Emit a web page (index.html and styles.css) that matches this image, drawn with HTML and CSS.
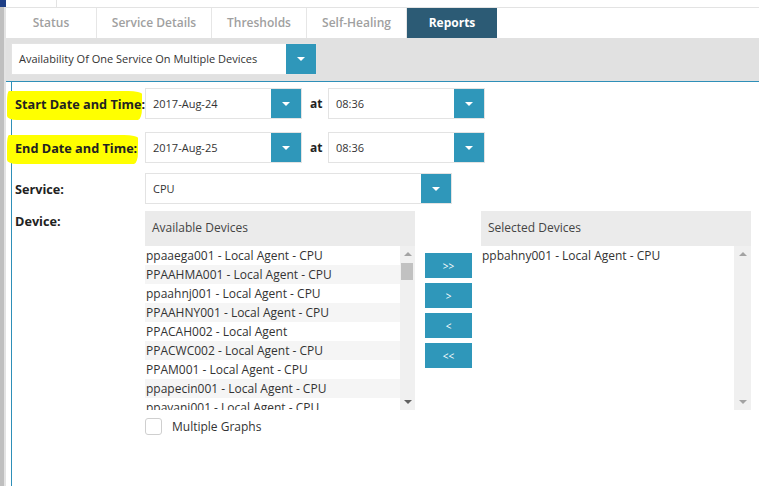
FILE: index.html
```html
<!DOCTYPE html>
<html lang="en">
<head>
    <meta charset="UTF-8">
    <title>Reports</title>
    <link rel="stylesheet" href="styles.css">
</head>
<body>
<div class="page">
    <div class="edge"></div>
    <div class="main">
        <div class="topbar"><div class="topcell"></div></div>

        <div class="tabs">
            <div class="tab tab-status">Status</div>
            <div class="tab tab-details">Service Details</div>
            <div class="tab tab-thresh">Thresholds</div>
            <div class="tab tab-heal">Self-Healing</div>
            <div class="tab tab-reports active">Reports</div>
        </div>

        <div class="toolbar">
            <div class="select report-select">
                <span class="value">Availability Of One Service On Multiple Devices</span>
                <span class="drop"><i class="caret"></i></span>
            </div>
        </div>

        <div class="content">
            <div class="row row-start">
                <label class="lbl"><span class="hl hl-a">Start Date and Time</span>:</label>
                <div class="select date"><span class="value">2017-Aug-24</span><span class="drop"><i class="caret"></i></span></div>
                <span class="at">at</span>
                <div class="select date"><span class="value">08:36</span><span class="drop"><i class="caret"></i></span></div>
            </div>
            <div class="row row-end">
                <label class="lbl"><span class="hl hl-b">End Date and Time:</span></label>
                <div class="select date"><span class="value">2017-Aug-25</span><span class="drop"><i class="caret"></i></span></div>
                <span class="at">at</span>
                <div class="select date"><span class="value">08:36</span><span class="drop"><i class="caret"></i></span></div>
            </div>
            <div class="row row-service">
                <label class="lbl">Service:</label>
                <div class="select service"><span class="value">CPU</span><span class="drop"><i class="caret"></i></span></div>
            </div>
            <div class="row row-device">
                <label class="lbl lbl-device">Device:</label>
                <div class="picker">
                    <div class="lists">
                        <div class="listbox">
                            <div class="list-head">Available Devices</div>
                            <div class="list-body">
                                <ul class="items">
                                    <li>ppaaega001 - Local Agent - CPU</li>
                                    <li>PPAAHMA001 - Local Agent - CPU</li>
                                    <li>ppaahnj001 - Local Agent - CPU</li>
                                    <li>PPAAHNY001 - Local Agent - CPU</li>
                                    <li>PPACAH002 - Local Agent</li>
                                    <li>PPACWC002 - Local Agent - CPU</li>
                                    <li>PPAM001 - Local Agent - CPU</li>
                                    <li>ppapecin001 - Local Agent - CPU</li>
                                    <li>ppavani001 - Local Agent - CPU</li>
                                </ul>
                                <div class="scroll"><span class="arr up"></span><span class="thumb"></span><span class="arr down"></span></div>
                            </div>
                        </div>
                        <div class="moves">
                            <button class="mv">&gt;&gt;</button>
                            <button class="mv">&gt;</button>
                            <button class="mv">&lt;</button>
                            <button class="mv">&lt;&lt;</button>
                        </div>
                        <div class="listbox">
                            <div class="list-head">Selected Devices</div>
                            <div class="list-body">
                                <ul class="items plain">
                                    <li>ppbahny001 - Local Agent - CPU</li>
                                </ul>
                                <div class="scroll wide"><span class="arr up"></span><span class="arr down"></span></div>
                            </div>
                        </div>
                    </div>
                    <label class="check"><span class="box"></span>Multiple Graphs</label>
                </div>
            </div>
        </div>
    </div>
</div>
</body>
</html>
```

FILE: styles.css
```css
body {
    margin: 0;
    font-family: "Open Sans", "Liberation Sans", sans-serif;
    color: #333;
    background: #fff;
}

.page {
    display: flex;
    height: 486px;
    overflow: hidden;
}

/* left window strip */
.edge {
    width: 6px;
    flex: none;
    background: linear-gradient(to right, #bfbfbf 0 4px, #e3e3e3 4px 6px);
}
.edge::before {
    content: "";
    display: block;
    height: 7px;
    background: #1f3f86;
}

.main {
    flex: 1;
}

.topbar {
    height: 7px;
    border-bottom: 1px solid #e3e3e3;
}
.topcell {
    width: 50px;
    height: 7px;
    border-right: 1px solid #e3e3e3;
}

/* tabs */
.tabs {
    display: flex;
    height: 30px;
}
.tab {
    line-height: 30px;
    text-align: center;
    font-size: 12px;
    font-weight: 600;
    color: #a0a0a0;
    border-right: 1px solid #e6e6e6;
}
.tab-status { width: 90px; }
.tab-details { width: 114px; }
.tab-thresh { width: 94px; }
.tab-heal { width: 99px; }
.tab-reports { width: 90px; border-right: none; }
.tab.active {
    background: #2c5b75;
    color: #fff;
    font-weight: 700;
}

.toolbar {
    background: #e1e1e1;
    height: 44px;
    padding: 5px 0 0 5px;
    box-sizing: border-box;
    border-bottom: 1px solid #2e8fb8;
}

/* dropdowns */
.select {
    display: flex;
    background: #fff;
    border: 1px solid #e3e3e3;
    height: 31px;
    box-sizing: border-box;
}
.select .value {
    flex: 1;
    padding-left: 7px;
    line-height: 29px;
    font-size: 11px;
    color: #333;
    white-space: nowrap;
}
.select .drop {
    width: 30px;
    background: #2f97ba;
    display: flex;
    align-items: center;
    justify-content: center;
}
.caret {
    width: 0;
    height: 0;
    border-left: 4px solid transparent;
    border-right: 4px solid transparent;
    border-top: 4px solid #fff;
}
.report-select {
    width: 306px;
    height: 32px;
}
.report-select .value {
    line-height: 30px;
}

.content {
    margin-left: 5px;
    border-left: 1px solid #2e8fb8;
    padding: 6px 0 0 3px;
    height: 420px;
}

.row {
    display: flex;
    align-items: center;
}
.row-end { margin-top: 13px; }
.row-service { margin-top: 10px; }
.row-device { margin-top: 7px; align-items: flex-start; }

.lbl {
    width: 130px;
    flex: none;
    font-size: 12.7px;
    font-weight: 700;
    color: #222;
    white-space: nowrap;
}
.lbl-device { padding-top: 1px; }

/* marker highlight */
.hl {
    background: #ffff00;
    margin-left: -8px;
    padding: 4px 0 7px 8px;
    border-radius: 2px 14px 4px 10px / 10px 3px 12px 4px;
}
.hl-b { padding-right: 1px; }

.date { width: 157px; }
.at {
    width: 26px;
    padding-left: 8px;
    box-sizing: border-box;
    font-size: 12px;
    font-weight: 700;
    color: #222;
}
.service { width: 307px; }

/* device picker */
.lists {
    display: flex;
}
.listbox {
    width: 270px;
}
.list-head {
    background: #ebebeb;
    height: 35px;
    line-height: 33px;
    padding-left: 7px;
    font-size: 12px;
    color: #444;
}
.list-body {
    display: flex;
    height: 164px;
    background: #fff;
}
.items {
    list-style: none;
    margin: 0;
    padding: 0;
    flex: 1;
    overflow: hidden;
}
.items li {
    height: 19px;
    line-height: 19px;
    padding-left: 1px;
    font-size: 12px;
    color: #333;
    white-space: nowrap;
}
.items li:nth-child(even) {
    background: #f5f5f5;
}
.items.plain li {
    background: none;
}

.scroll {
    width: 15px;
    background: #f0f0f0;
    position: relative;
}
.scroll.wide { width: 17px; }
.arr {
    position: absolute;
    left: 50%;
    margin-left: -4px;
    width: 0;
    height: 0;
    border-left: 4px solid transparent;
    border-right: 4px solid transparent;
}
.arr.up { top: 6px; border-bottom: 4px solid #a3a3a3; }
.arr.down { bottom: 6px; border-top: 4px solid #606060; }
.scroll.wide .arr.down { border-top-color: #a3a3a3; }
.thumb {
    position: absolute;
    left: 1px;
    right: 2px;
    top: 17px;
    height: 17px;
    background: #c1c1c1;
}

.moves {
    display: flex;
    flex-direction: column;
    gap: 5px;
    padding: 42px 9px 0 10px;
}
.mv {
    width: 47px;
    height: 25px;
    border: none;
    background: #2f97ba;
    color: #fff;
    font-family: "Open Sans", sans-serif;
    font-size: 10px;
    padding: 0;
}

.check {
    display: flex;
    align-items: center;
    margin-top: 8px;
    font-size: 12px;
    color: #333;
}
.check .box {
    width: 15px;
    height: 15px;
    border: 1px solid #cfcfcf;
    border-radius: 3px;
    margin-right: 10px;
}
```
